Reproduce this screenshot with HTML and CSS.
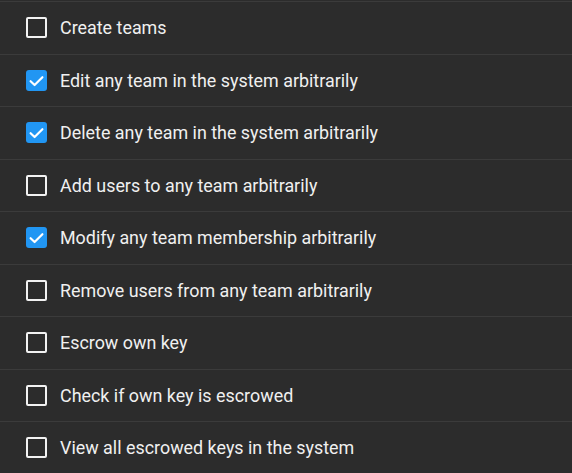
FILE: index.html
```html
<!DOCTYPE html>
<html lang="en">
<head>
<meta charset="utf-8">
<title>Permissions</title>
<link rel="stylesheet" href="styles.css">
</head>
<body>
<ul class="perm-list">
  <li class="perm"><span class="box"></span><span class="label">Create teams</span></li>
  <li class="perm"><span class="box checked"><svg viewBox="0 0 21 21"><polyline points="4.6,11.2 8.6,15 16.4,7.2"/></svg></span><span class="label">Edit any team in the system arbitrarily</span></li>
  <li class="perm"><span class="box checked"><svg viewBox="0 0 21 21"><polyline points="4.6,11.2 8.6,15 16.4,7.2"/></svg></span><span class="label">Delete any team in the system arbitrarily</span></li>
  <li class="perm"><span class="box"></span><span class="label">Add users to any team arbitrarily</span></li>
  <li class="perm"><span class="box checked"><svg viewBox="0 0 21 21"><polyline points="4.6,11.2 8.6,15 16.4,7.2"/></svg></span><span class="label">Modify any team membership arbitrarily</span></li>
  <li class="perm"><span class="box"></span><span class="label">Remove users from any team arbitrarily</span></li>
  <li class="perm"><span class="box"></span><span class="label">Escrow own key</span></li>
  <li class="perm"><span class="box"></span><span class="label">Check if own key is escrowed</span></li>
  <li class="perm"><span class="box"></span><span class="label">View all escrowed keys in the system</span></li>
</ul>
</body>
</html>
```

FILE: styles.css
```css
html, body {
  margin: 0;
  padding: 0;
  background: #2c2c2c;
  height: 100%;
  overflow: hidden;
}

.perm-list {
  list-style: none;
  margin: 0;
  padding: 1px 0 0 0;
}

.perm {
  display: flex;
  align-items: center;
  height: 51.5px;
  border-top: 1px solid #3b3b3b;
  padding-left: 26px;
  font-family: Roboto, "Noto Sans", Arial, sans-serif;
  font-size: 17.9px;
  color: #f0f0f0;
}

.box {
  flex: none;
  width: 21px;
  height: 21px;
  box-sizing: border-box;
  border: 2px solid #f2f2f2;
  border-radius: 2px;
  margin-right: 13px;
  display: flex;
}

.box.checked {
  background: #2196f3;
  border-color: #2196f3;
  border-width: 0;
  border-radius: 3px;
}

.box svg {
  width: 21px;
  height: 21px;
}

.box polyline {
  fill: none;
  stroke: #ffffff;
  stroke-width: 2.2;
  stroke-linecap: round;
  stroke-linejoin: round;
}

.label {
  white-space: nowrap;
}
```
